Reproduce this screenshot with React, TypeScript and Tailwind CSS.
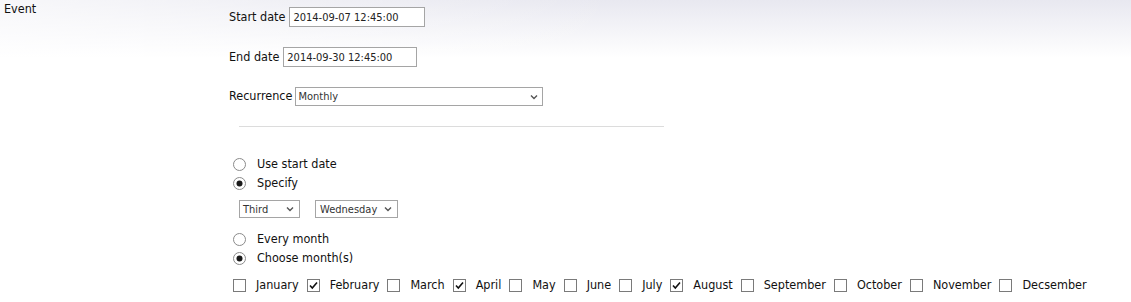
import React from "react";

const Radio = ({ checked }: { checked?: boolean }) => (
  <svg width="13" height="13" viewBox="0 0 13 13" className="shrink-0">
    <circle cx="6.5" cy="6.5" r="6" fill="#ffffff" stroke="#8a8a8a" strokeWidth="1" />
    {checked && <circle cx="6.5" cy="6.5" r="3" fill="#1a1a1a" />}
  </svg>
);

const Check = ({ checked }: { checked?: boolean }) => (
  <svg width="13" height="13" viewBox="0 0 13 13" className="shrink-0">
    <rect x="0.5" y="0.5" width="12" height="12" fill="#ffffff" stroke="#7a7a7a" strokeWidth="1" />
    {checked && (
      <polyline points="3,6.5 5.3,9 10,3.5" fill="none" stroke="#111111" strokeWidth="1.6" />
    )}
  </svg>
);

const Chevron = () => (
  <svg width="8" height="6" viewBox="0 0 8 6" className="shrink-0">
    <polyline points="1,1.5 4,4.5 7,1.5" fill="none" stroke="#555555" strokeWidth="1.4" />
  </svg>
);

const months: [string, boolean][] = [
  ["January", false],
  ["February", true],
  ["March", false],
  ["April", true],
  ["May", false],
  ["June", false],
  ["July", false],
  ["August", true],
  ["September", false],
  ["October", false],
  ["November", false],
  ["Decsember", false],
];

export default function App() {
  return (
    <div className="min-h-[302px] w-full bg-[linear-gradient(to_right,rgba(255,255,255,0.65),rgba(255,255,255,0)_55%),linear-gradient(to_bottom,#e8e8f0,#ffffff_58px)] font-['DejaVu_Sans_Condensed','DejaVu_Sans',sans-serif] text-[12.5px] leading-none text-[#111]">
      <div className="flex">
        <div className="w-[229px] shrink-0 pl-[4px] pt-[3px] leading-[12px]">Event</div>
        <div className="flex flex-col">
          <div className="mt-[7px] flex h-[20px] items-center">
            <span>Start date</span>
            <div className="ml-[4px] flex h-[20px] w-[136px] items-center border border-[#a5a5a5] bg-white pl-[3px] text-[11px] text-[#222]">
              2014-09-07 12:45:00
            </div>
          </div>
          <div className="mt-[20px] flex h-[20px] items-center">
            <span>End date</span>
            <div className="ml-[4px] flex h-[20px] w-[134px] items-center border border-[#a5a5a5] bg-white pl-[3px] text-[11px] text-[#222]">
              2014-09-30 12:45:00
            </div>
          </div>
          <div className="mt-[20px] flex h-[19px] items-center">
            <span>Recurrence</span>
            <div className="ml-[3px] flex h-[19px] w-[248px] items-center justify-between border border-[#a5a5a5] bg-white pl-[2px] pr-[4px] text-[11px] text-[#333]">
              <span>Monthly</span>
              <Chevron />
            </div>
          </div>
          <div className="ml-[10px] mt-[20px] h-px w-[425px] bg-[#dcdcdc]" />
          <div className="mt-[28px] flex h-[19px] items-center pl-[4px]">
            <Radio />
            <span className="ml-[11px]">Use start date</span>
          </div>
          <div className="flex h-[19px] items-center pl-[4px]">
            <Radio checked />
            <span className="ml-[11px]">Specify</span>
          </div>
          <div className="ml-[10px] mt-[7px] flex h-[18px] items-center gap-[15px] text-[11px] text-[#333]">
            <div className="flex h-[18px] w-[61px] items-center justify-between border border-[#a5a5a5] bg-white pl-[3px] pr-[5px]">
              <span>Third</span>
              <Chevron />
            </div>
            <div className="flex h-[18px] w-[83px] items-center justify-between border border-[#a5a5a5] bg-white pl-[4px] pr-[5px]">
              <span>Wednesday</span>
              <Chevron />
            </div>
          </div>
          <div className="mt-[12px] flex h-[19px] items-center pl-[4px]">
            <Radio />
            <span className="ml-[11px]">Every month</span>
          </div>
          <div className="flex h-[18px] items-center pl-[4px]">
            <Radio checked />
            <span className="ml-[11px]">Choose month(s)</span>
          </div>
          <div className="mt-[9px] flex h-[19px] items-center pl-[4px]">
            {months.map(([m, c], i) => (
              <div key={m} className={`flex items-center ${i === 0 ? "" : "ml-[8px]"}`}>
                <Check checked={c} />
                <span className="ml-[10px]">{m}</span>
              </div>
            ))}
          </div>
        </div>
      </div>
    </div>
  );
}
